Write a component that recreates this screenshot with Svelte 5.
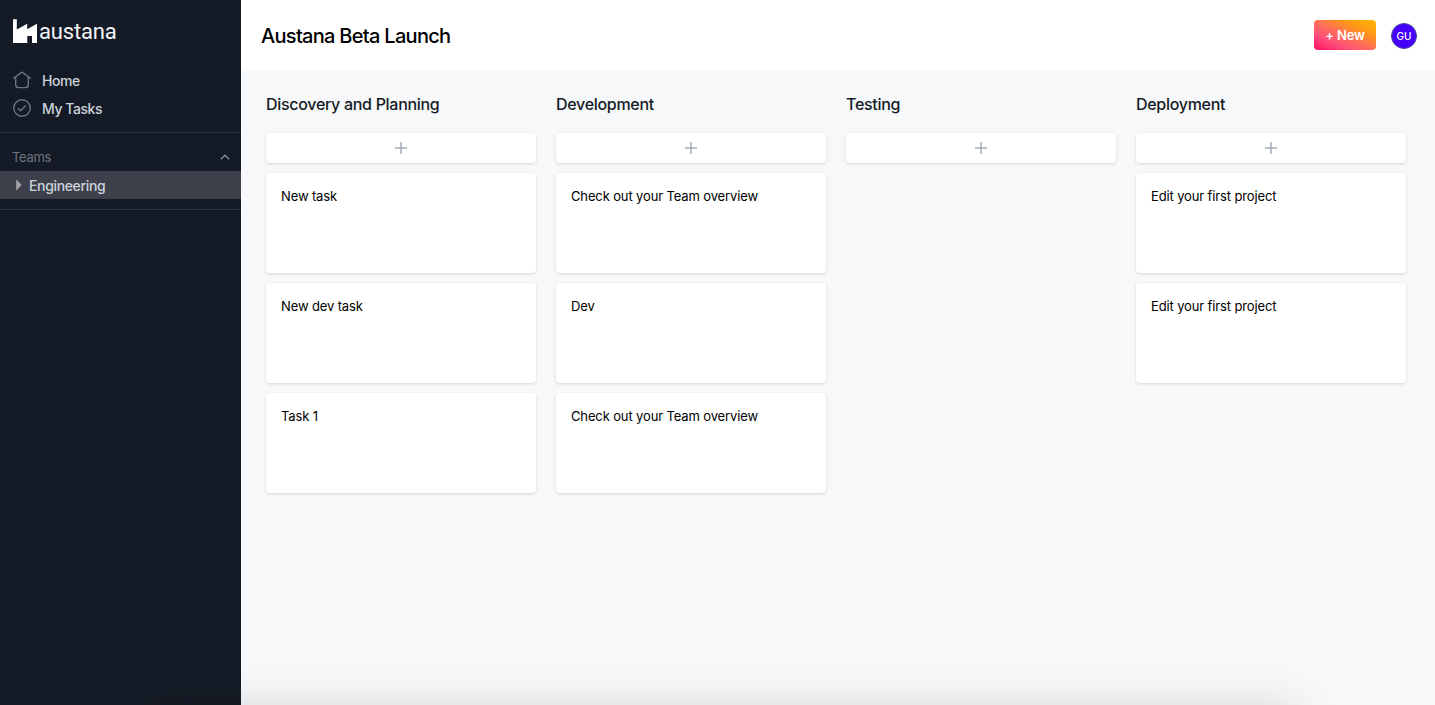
<script>
  const columns = [
    { title: 'Discovery and Planning', tasks: ['New task', 'New dev task', 'Task 1'] },
    { title: 'Development', tasks: ['Check out your Team overview', 'Dev', 'Check out your Team overview'] },
    { title: 'Testing', tasks: [] },
    { title: 'Deployment', tasks: ['Edit your first project', 'Edit your first project'] }
  ];
</script>

<div class="app">
  <aside>
    <div class="logo">
      <svg width="24" height="24" viewBox="0 0 24 24" fill="#fff">
        <path d="M0 .3H3.8V10.6L14.2 4.8V10.2L24 4.8V24H19V17H14.3V24H0Z" />
      </svg>
      <span>austana</span>
    </div>
    <nav>
      <a class="item">
        <svg width="20" height="20" viewBox="0 0 20 20" fill="none" stroke="#6d7380" stroke-width="1.4" stroke-linecap="round" stroke-linejoin="round">
          <path d="M1.5 8.2L9.2 2.6Q10 2 10.8 2.6L18.5 8.2M3.7 6.8V14.8Q3.7 17.6 6.5 17.6H13.5Q16.3 17.6 16.3 14.8V6.8" />
        </svg>
        <span>Home</span>
      </a>
      <a class="item">
        <svg width="20" height="20" viewBox="0 0 20 20" fill="none" stroke="#6d7380" stroke-width="1.4" stroke-linecap="round" stroke-linejoin="round">
          <circle cx="10" cy="10" r="8.3" />
          <path d="M6.3 10.5L8.6 12.7L13.5 7.8" />
        </svg>
        <span>My Tasks</span>
      </a>
    </nav>
    <section>
      <div class="teams">
        <span>Teams</span>
        <svg width="10" height="6" viewBox="0 0 10 6" fill="none" stroke="#858a94" stroke-width="1.3"><path d="M.8 5.2L5 1.2L9.2 5.2" /></svg>
      </div>
      <div class="team">
        <svg width="6" height="10" viewBox="0 0 6 10" fill="#a2a0a2"><path d="M.2 0H1L5.6 5L1 10H.2Z" /></svg>
        <span>Engineering</span>
      </div>
    </section>
  </aside>
  <main>
    <header>
      <h1>Austana Beta Launch</h1>
      <div class="actions">
        <button>+ New</button>
        <div class="avatar">GU</div>
      </div>
    </header>
    <div class="board">
      {#each columns as column}
        <div class="column">
          <h2>{column.title}</h2>
          <div class="add">
            <svg width="12" height="12" viewBox="0 0 12 12" fill="none" stroke="#a5adb8" stroke-width="1.5"><path d="M6 0V12M0 6H12" /></svg>
          </div>
          {#each column.tasks as task}
            <div class="card"><span>{task}</span></div>
          {/each}
        </div>
      {/each}
    </div>
  </main>
  <div class="shade"></div>
</div>

<style>
  :global(body) { margin: 0; }
  .app {
    position: relative;
    display: flex;
    width: 100%;
    height: 705px;
    overflow: hidden;
    font-family: Inter, sans-serif;
    background: #f6f8f9;
  }
  aside { width: 241px; flex: none; background: #151b26; color: #cbd4db; }
  .logo { display: flex; align-items: center; gap: 2px; padding: 19px 13px 0; height: 24px; }
  .logo span { padding-top: 1px; font: 400 22px/24px Roboto, sans-serif; color: #f3f4f6; letter-spacing: -0.15px; }
  nav { padding: 24px 0 9px; border-bottom: 1px solid #2a3240; }
  .item { display: flex; align-items: center; height: 28px; padding-left: 12px; gap: 10px; font-size: 14px; font-weight: 500; }
  .item svg { position: relative; top: -1px; }
  .item span { height: 19px; line-height: 17px; letter-spacing: -0.45px; }
  section { padding: 10px 0; border-bottom: 1px solid #253247; }
  .teams { display: flex; align-items: center; justify-content: space-between; height: 28px; padding: 0 11px 0 12px; color: #6d7380; font-size: 13px; letter-spacing: -0.3px; }
  .team { display: flex; align-items: center; height: 28px; padding-left: 16px; gap: 7px; background: #3d404a; font-size: 14px; font-weight: 500; letter-spacing: -0.35px; }
  main { flex: 1; min-width: 0; }
  header { display: flex; align-items: center; justify-content: space-between; height: 71px; box-sizing: border-box; padding: 0 18px 0 20px; background: #fff; }
  h1 { margin: 0; font-size: 20px; font-weight: 500; letter-spacing: -0.7px; color: #000; }
  .actions { display: flex; align-items: center; gap: 15px; }
  button { width: 62px; height: 30px; margin: 0 0 2px; padding: 0; border: 0; border-radius: 4px; background: linear-gradient(to top right, #ff0f60 0%, #ff4f7c 28%, #ff7058 50%, #ff9618 72%, #ffb900 100%); color: #fff; font: 600 13px Inter, sans-serif; letter-spacing: -0.15px; }
  .avatar { display: flex; align-items: center; justify-content: center; width: 26px; height: 26px; box-sizing: border-box; border: 1px solid #4a4a9c; border-radius: 50%; background: #4400fa; color: #fff; font-size: 10px; font-weight: 500; }
  .board { display: flex; gap: 20px; padding: 20px 25px; }
  .column { display: flex; flex-direction: column; gap: 10px; width: 270px; flex: none; }
  h2 { margin: 0 0 6px; height: 26px; font-size: 16px; line-height: 26px; font-weight: 500; letter-spacing: -0.3px; color: #151b26; }
  .add, .card { background: #fff; border-radius: 4px; box-shadow: 0 1px 3px rgba(21, 27, 38, 0.15); }
  .add { display: flex; align-items: center; justify-content: center; height: 30px; }
  .card { box-sizing: border-box; height: 100px; padding: 15px; color: #000; font-size: 13px; line-height: 17px; letter-spacing: -0.13px; }
  .shade { position: absolute; left: 140px; right: 137px; top: 708px; height: 80px; border-radius: 20px; box-shadow: 0 0 46px rgba(0, 0, 0, 0.15); }
</style>
